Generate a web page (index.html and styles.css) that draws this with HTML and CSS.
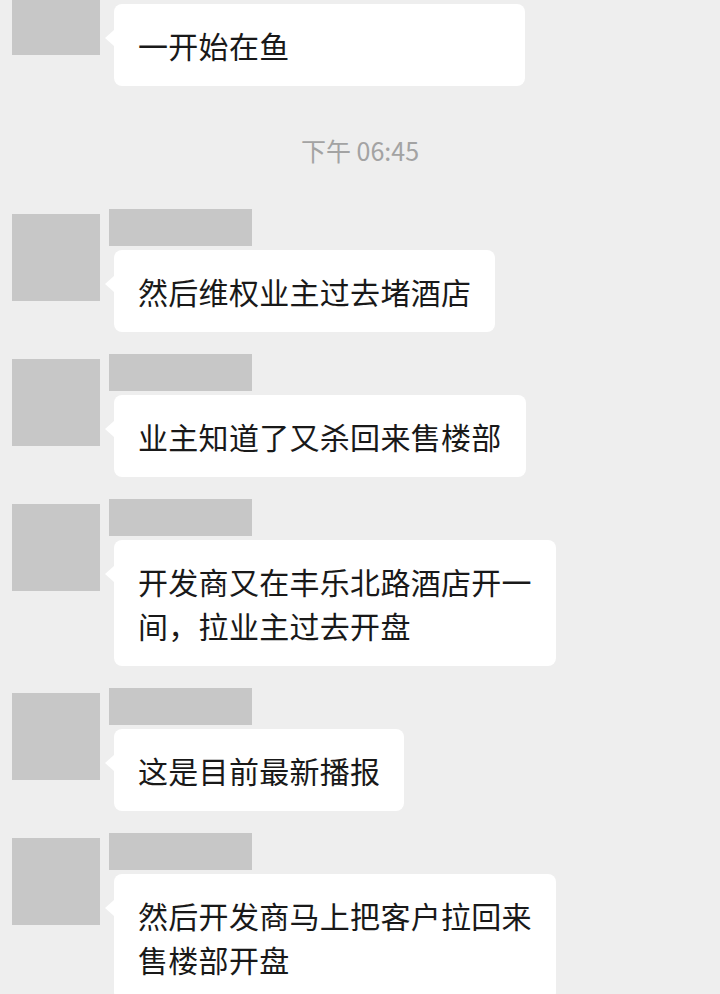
FILE: index.html
```html
<!DOCTYPE html>
<html lang="zh-CN">
  <head>
    <meta charset="UTF-8" />
    <meta name="viewport" content="width=device-width, initial-scale=1.0" />
    <title>聊天记录</title>
    <link rel="stylesheet" href="styles.css">
  </head>
  <body>
    <div class="chat">
      <div class="msg">
        <div class="avatar"></div>
        <div class="msg-body">
          <div class="name"></div>
          <div class="bubble bubble-wide">一开始在鱼</div>
        </div>
      </div>

      <div class="time">下午 06:45</div>

      <div class="msg">
        <div class="avatar"></div>
        <div class="msg-body">
          <div class="name"></div>
          <div class="bubble">然后维权业主过去堵酒店</div>
        </div>
      </div>

      <div class="msg">
        <div class="avatar"></div>
        <div class="msg-body">
          <div class="name"></div>
          <div class="bubble">业主知道了又杀回来售楼部</div>
        </div>
      </div>

      <div class="msg">
        <div class="avatar"></div>
        <div class="msg-body">
          <div class="name"></div>
          <div class="bubble">开发商又在丰乐北路酒店开一间，拉业主过去开盘</div>
        </div>
      </div>

      <div class="msg">
        <div class="avatar"></div>
        <div class="msg-body">
          <div class="name"></div>
          <div class="bubble">这是目前最新播报</div>
        </div>
      </div>

      <div class="msg">
        <div class="avatar"></div>
        <div class="msg-body">
          <div class="name"></div>
          <div class="bubble">然后开发商马上把客户拉回来售楼部开盘</div>
        </div>
      </div>
    </div>
  </body>
</html>
```

FILE: styles.css
```css
html,
body {
  margin: 0;
  padding: 0;
  background: #eeeeee;
}
body {
  font-family: "Noto Sans CJK SC", "Noto Sans", sans-serif;
  color: #191919;
  overflow: hidden;
  height: 994px;
}
.chat {
  display: flex;
  flex-direction: column;
  gap: 22px;
  margin-top: -37px;
  padding: 0 12px;
}
.msg {
  display: flex;
  align-items: flex-start;
}
.avatar {
  flex: none;
  width: 88px;
  height: 87px;
  margin-top: 5px;
  background: #c7c7c7;
}
.msg-body {
  display: flex;
  flex-direction: column;
  align-items: flex-start;
  margin-left: 9px;
}
.name {
  width: 143px;
  height: 37px;
  margin-bottom: 4px;
  background: #c7c7c7;
}
.bubble {
  position: relative;
  margin-left: 5px;
  max-width: 394px;
  padding: 19px 24px;
  background: #fff;
  border-radius: 8px;
  font-size: 30px;
  line-height: 44px;
  letter-spacing: 0.3px;
}
.bubble::before {
  content: "";
  position: absolute;
  left: -9px;
  top: 26px;
  border-top: 8px solid transparent;
  border-bottom: 8px solid transparent;
  border-right: 9px solid #fff;
}
.bubble-wide {
  width: 363px;
}
.time {
  text-align: center;
  font-size: 25px;
  line-height: 30px;
  color: #a3a3a3;
  margin: 27px 0 22px;
}
```
